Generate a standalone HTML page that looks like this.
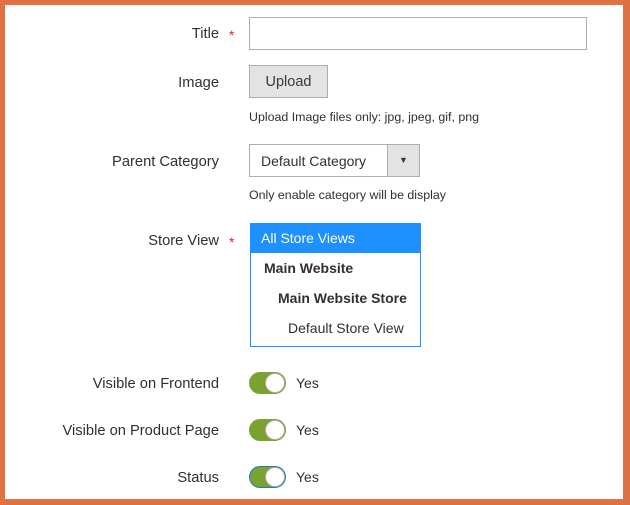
<!DOCTYPE html>
<html><head><style>
*{box-sizing:border-box;margin:0;padding:0}
body{width:630px;height:505px;background:#df7143;position:relative;font-family:"Liberation Sans",sans-serif;color:#303030;font-size:14px;overflow:hidden}
.in{position:absolute;left:5px;top:5px;width:618px;height:494px;background:#fff}
.l{position:absolute;right:411px;text-align:right;white-space:nowrap;font-size:14.7px;margin-top:1px}
.s{position:absolute;left:229px;color:#e22626;font-size:14px}
.a{position:absolute}
.note{position:absolute;left:249px;font-size:12.4px;color:#303030}
.tg{position:absolute;left:249px;width:37px;height:22px;border-radius:11px;background:#79a22e;border:1px solid #79a22e}
.tg::after{content:"";position:absolute;right:0;top:0;width:20px;height:20px;border-radius:50%;background:#fff;border:1px solid #adadad;box-sizing:border-box}
.y{position:absolute;left:296px}
</style></head><body>
<div class="in"></div>
<div class="l" style="top:25px">Title</div><div class="s" style="top:27px">*</div>
<div class="a" style="left:249px;top:17px;width:338px;height:33px;border:1px solid #adadad"></div>
<div class="l" style="top:74px">Image</div>
<div class="a" style="left:249px;top:65px;width:79px;height:33px;border:1px solid #adadad;background:#e3e3e3;text-align:center;line-height:33px;font-size:14.5px;color:#41362f">Upload</div>
<div class="note" style="top:110px">Upload Image files only: jpg, jpeg, gif, png</div>
<div class="l" style="top:153px">Parent Category</div>
<div class="a" style="left:249px;top:144px;width:171px;height:33px;border:1px solid #adadad"><span style="position:absolute;left:11px;top:8px">Default Category</span><div style="position:absolute;right:0;top:0;width:32px;height:31px;background:#e3e3e3;border-left:1px solid #adadad;text-align:center;line-height:31px;font-size:9px;color:#41362f">▼</div></div>
<div class="note" style="top:188px">Only enable category will be display</div>
<div class="l" style="top:232px">Store View</div><div class="s" style="top:234px">*</div>
<div class="a" style="left:250px;top:223px;width:171px;height:124px;border:1px solid #1e90ff">
<div style="background:#1e90ff;color:#fff;height:29px;line-height:29px;padding-left:10px">All Store Views</div>
<div style="font-weight:bold;height:30px;line-height:30px;padding-left:13px">Main Website</div>
<div style="font-weight:bold;height:30px;line-height:30px;padding-left:27px">Main Website Store</div>
<div style="height:30px;line-height:30px;padding-left:37px">Default Store View</div>
</div>
<div class="l" style="top:375px">Visible on Frontend</div>
<div class="tg" style="top:372px"></div><div class="y" style="top:375px">Yes</div>
<div class="l" style="top:422px">Visible on Product Page</div>
<div class="tg" style="top:419px"></div><div class="y" style="top:422px">Yes</div>
<div class="l" style="top:469px">Status</div>
<div class="tg" style="top:466px;border-color:#1e78d0"></div><div class="y" style="top:469px">Yes</div>
</body></html>
